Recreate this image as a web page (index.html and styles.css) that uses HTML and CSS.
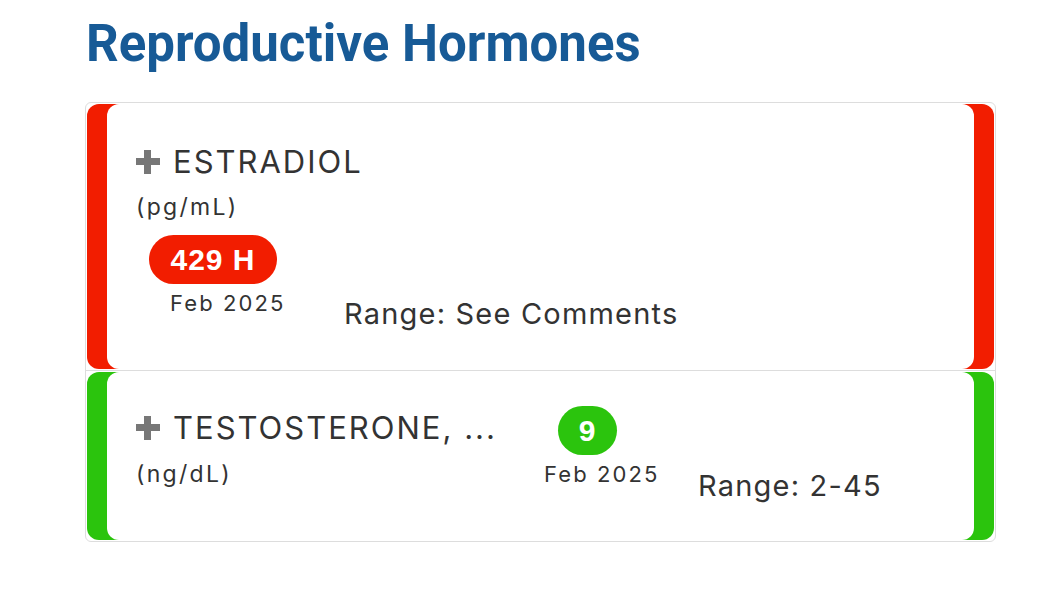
FILE: index.html
```html
<!DOCTYPE html>
<html>
<head>
  <title>Reproductive Hormones</title>
  <link rel="stylesheet" href="styles.css">
</head>
<body>
  <div class="page">
    <h1 class="section-title">Reproductive Hormones</h1>
    <div class="panel">
      <!-- high result -->
      <div class="item">
        <div class="row row-high">
          <div class="card card-stacked">
            <div class="test-name">
              <span class="plus"></span>
              <span class="name-text">ESTRADIOL</span>
            </div>
            <div class="unit">(pg/mL)</div>
            <div class="result-line">
              <div class="value value-high">
                <span class="badge badge-high">429 H</span>
                <span class="date">Feb 2025</span>
              </div>
              <div class="range">Range: See Comments</div>
            </div>
          </div>
        </div>
      </div>
      <!-- normal result -->
      <div class="item">
        <div class="row row-normal">
          <div class="card card-inline">
            <div class="name-col">
              <div class="test-name">
                <span class="plus"></span>
                <span class="name-text">TESTOSTERONE, ...</span>
              </div>
              <div class="unit">(ng/dL)</div>
            </div>
            <div class="value value-normal">
              <span class="badge badge-normal">9</span>
              <span class="date">Feb 2025</span>
            </div>
            <div class="range">Range: 2-45</div>
          </div>
        </div>
      </div>
    </div>
  </div>
</body>
</html>
```

FILE: styles.css
```css
html, body {
  margin: 0;
  padding: 0;
  background-color: #fff;
  font-family: Inter, "Open Sans", sans-serif;
  color: #333;
}
.page {
  padding: 14px 0 0 85px;
  width: 911px;
}
.section-title {
  margin: 0 0 28px 1px;
  font-family: Roboto, sans-serif;
  font-weight: 700;
  font-size: 51px;
  line-height: 60px;
  color: #175a96;
}
.panel {
  border: 1px solid #ddd;
  border-radius: 6px;
}
.item {
  padding: 1px;
}
.item + .item {
  border-top: 1px solid #ddd;
}
.row {
  border-radius: 12px;
  padding: 0 20px;
}
.row-high {
  background-color: #f21d00;
}
.row-normal {
  background-color: #2bc40d;
}
.card {
  background-color: #fff;
  border-radius: 12px;
  padding-left: 29px;
}
.card-stacked {
  height: 265px;
  padding-top: 40px;
  box-sizing: border-box;
}
.card-inline {
  height: 168px;
  box-sizing: border-box;
  padding-top: 34px;
  display: flex;
  align-items: flex-start;
}
.test-name {
  display: flex;
  align-items: center;
  gap: 13px;
  font-size: 31px;
  line-height: 36px;
  letter-spacing: 2px;
}
.plus {
  position: relative;
  flex: none;
  width: 24px;
  height: 24px;
}
.plus::before, .plus::after {
  content: "";
  position: absolute;
  background-color: #777;
}
.plus::before {
  left: 0;
  top: 8px;
  width: 24px;
  height: 7px;
}
.plus::after {
  left: 8px;
  top: 0;
  width: 7px;
  height: 24px;
}
.unit {
  font-size: 23px;
  line-height: 28px;
  letter-spacing: 2.3px;
  margin-top: 13px;
}
.result-line {
  display: flex;
  align-items: flex-start;
  margin-top: 14px;
}
.value {
  display: flex;
  flex-direction: column;
  align-items: flex-start;
}
.value-high {
  width: 208px;
}
.value-high .badge {
  margin-left: 13px;
}
.value-high .date {
  margin-left: 34px;
}
.badge {
  display: inline-block;
  height: 49px;
  line-height: 49px;
  border-radius: 25px;
  color: #fff;
  font-family: "Liberation Sans", Arial, sans-serif;
  font-weight: 700;
  font-size: 30px;
  letter-spacing: 1px;
  text-align: center;
}
.badge-high {
  width: 128px;
  background-color: #f21d00;
}
.badge-normal {
  width: 59px;
  background-color: #2bc40d;
}
.date {
  font-size: 22px;
  line-height: 26px;
  letter-spacing: 2.1px;
  margin-top: 6px;
}
.range {
  font-size: 29px;
  line-height: 34px;
  letter-spacing: 1.2px;
  margin-top: 62px;
}
.name-col {
  width: 408px;
  margin-top: 4px;
}
.card-inline .unit {
  margin-top: 14px;
}
.value-normal {
  width: 154px;
}
.value-normal .badge {
  margin-left: 14px;
}
.card-inline .range {
  margin-top: 63px;
}
```
